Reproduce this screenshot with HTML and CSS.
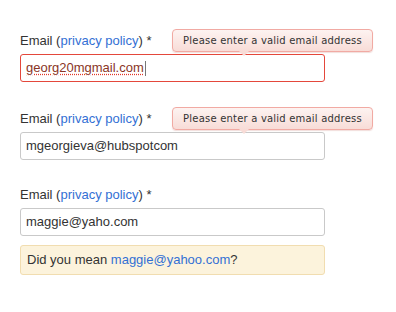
FILE: index.html
```html
<!DOCTYPE html>
<html>
<head>
<meta charset="UTF-8">
<title>Email validation</title>
<link rel="stylesheet" href="styles.css">
</head>
<body>
<form class="signup">

  <div class="field">
    <label class="field-label">Email (<a href="#">privacy policy</a>) *</label>
    <div class="field-input invalid"><span class="misspelled">georg20mgmail.com</span><span class="caret"></span></div>
    <div class="tip">Please enter a valid email address</div>
  </div>

  <div class="field">
    <label class="field-label">Email (<a href="#">privacy policy</a>) *</label>
    <div class="field-input">mgeorgieva@hubspotcom</div>
    <div class="tip">Please enter a valid email address</div>
  </div>

  <div class="field">
    <label class="field-label">Email (<a href="#">privacy policy</a>) *</label>
    <div class="field-input">maggie@yaho.com</div>
    <div class="suggest">Did you mean <a href="#">maggie@yahoo.com</a>?</div>
  </div>

</form>
</body>
</html>
```

FILE: styles.css
```css
body {
  margin: 0;
  background: #ffffff;
  font-family: "Liberation Sans", Arial, sans-serif;
  color: #333333;
}

a {
  color: #3370d4;
  text-decoration: none;
}

.signup {
  padding: 32px 0 0 20px;
  width: 305px;
}

.field {
  position: relative;
  margin-bottom: 28px;
}

.field:nth-child(2) {
  margin-bottom: 26px;
}

.field-label {
  display: block;
  font-size: 13px;
  line-height: 18px;
  margin-bottom: 4px;
}

.field-input {
  box-sizing: border-box;
  height: 28px;
  padding: 0 5px;
  border: 1px solid #c9c9c9;
  border-radius: 3px;
  font-size: 13px;
  line-height: 26px;
  color: #333333;
  display: flex;
  align-items: center;
}

.field-input.invalid {
  border-color: #e4473b;
}

.misspelled {
  color: #8a3526;
  text-decoration: underline dotted #e2392b;
  text-underline-offset: 2px;
}

.caret {
  display: inline-block;
  width: 1px;
  height: 15px;
  margin-left: 1px;
  background: #777777;
}

.tip {
  position: absolute;
  top: -3px;
  left: 152px;
  box-sizing: border-box;
  width: 201px;
  height: 23px;
  border: 1px solid #f1aaa3;
  border-radius: 4px;
  background: linear-gradient(#fdf3f1, #f8dcd7);
  box-shadow: 0 1px 1px rgba(200, 120, 110, 0.25);
  font-family: "DejaVu Sans", Verdana, sans-serif;
  font-size: 10px;
  line-height: 21px;
  letter-spacing: 0.2px;
  text-align: center;
  color: #333333;
}

.tip::after {
  content: "";
  position: absolute;
  left: 66px;
  bottom: -5px;
  border-left: 5px solid transparent;
  border-right: 5px solid transparent;
  border-top: 5px solid #f8dcd7;
}

.suggest {
  margin-top: 9px;
  box-sizing: border-box;
  height: 30px;
  padding: 0 6px;
  border: 1px solid #f1ddb0;
  border-radius: 3px;
  background: #fcf3dc;
  font-size: 13px;
  line-height: 28px;
}
```
